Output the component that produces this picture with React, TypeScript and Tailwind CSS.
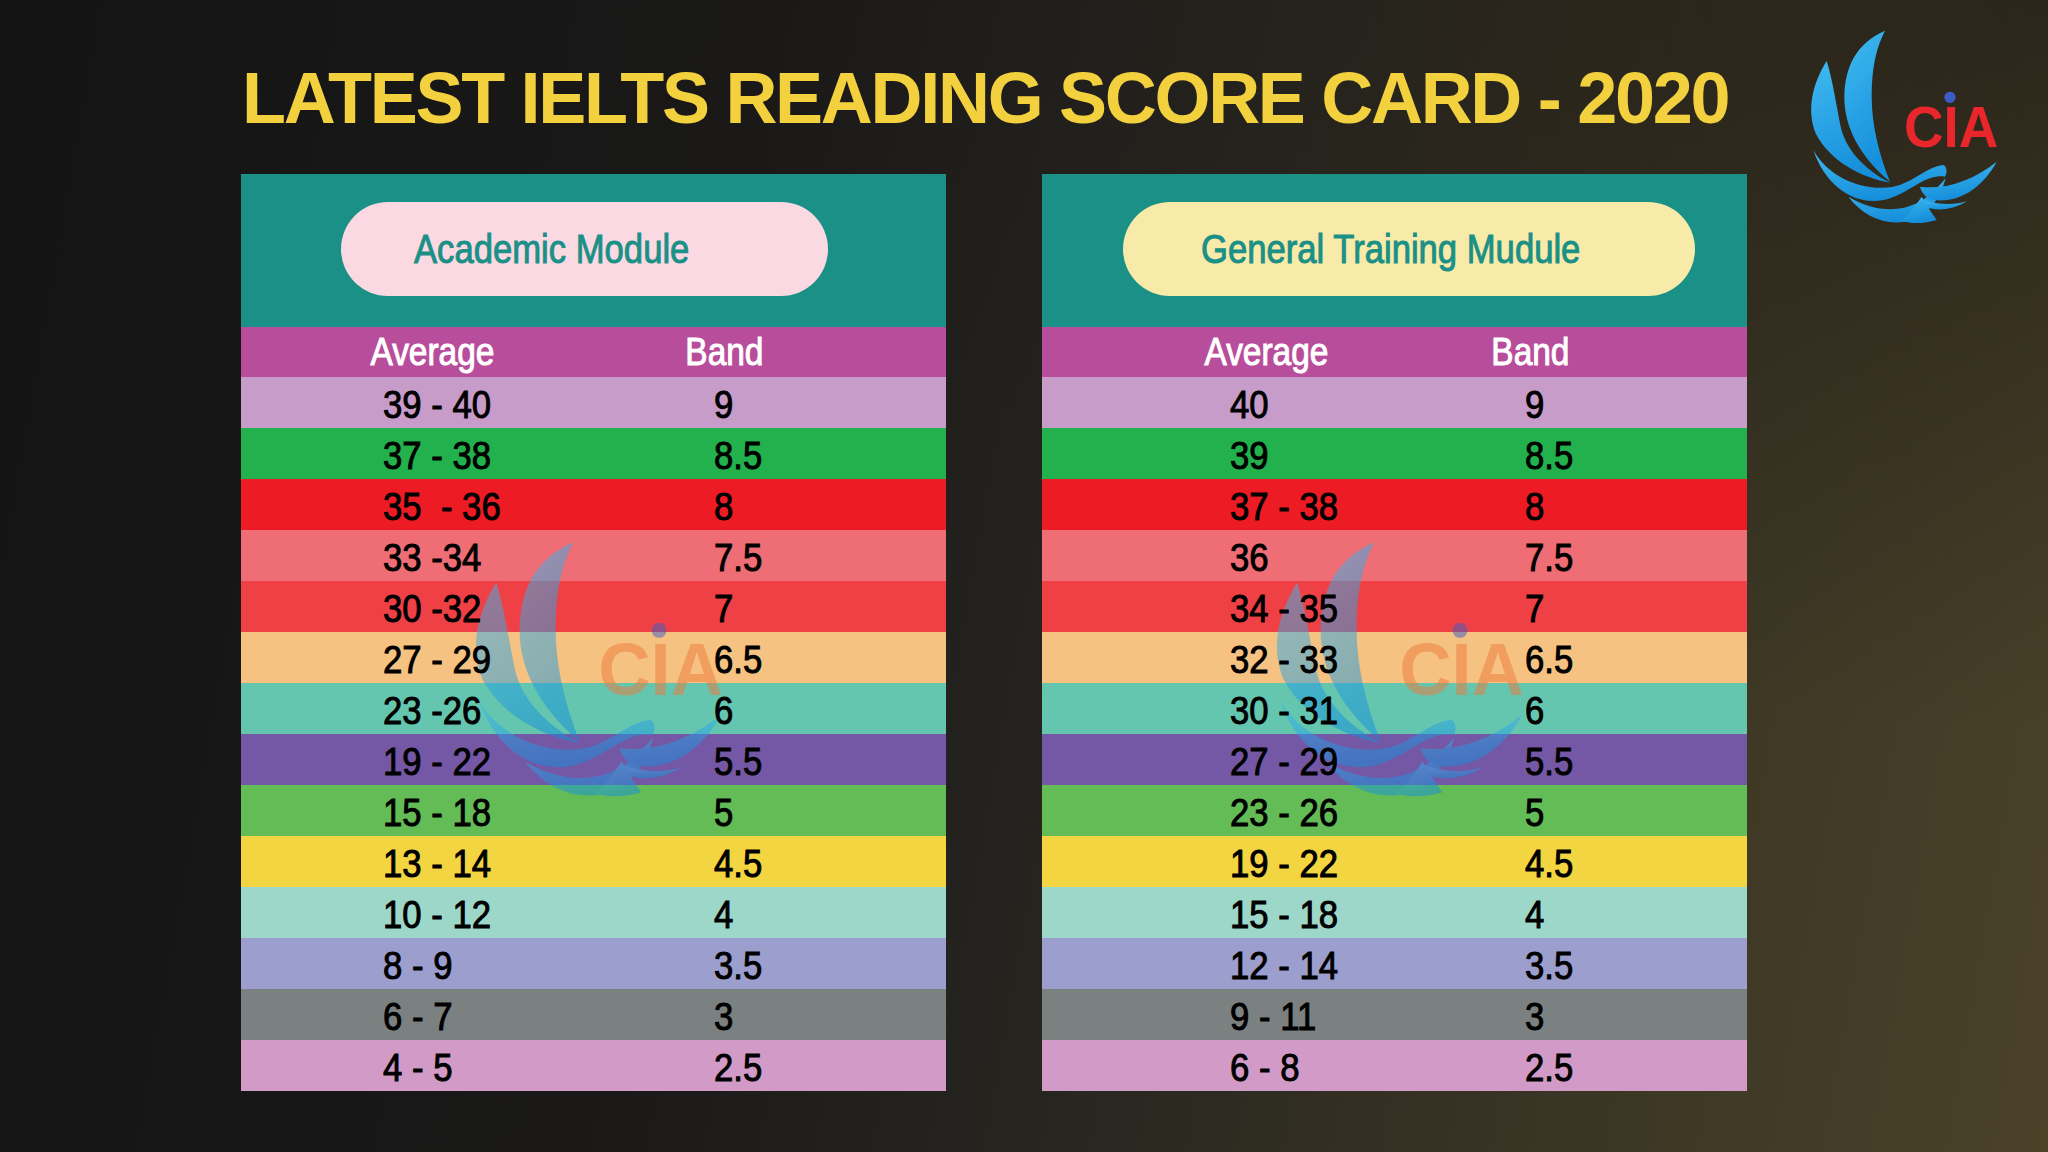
import React from 'react';

type Row = [string, string];

const academicRows: Row[] = [
  ['39 - 40', '9'],
  ['37 - 38', '8.5'],
  ['35  - 36', '8'],
  ['33 -34', '7.5'],
  ['30 -32', '7'],
  ['27 - 29', '6.5'],
  ['23 -26', '6'],
  ['19 - 22', '5.5'],
  ['15 - 18', '5'],
  ['13 - 14', '4.5'],
  ['10 - 12', '4'],
  ['8 - 9', '3.5'],
  ['6 - 7', '3'],
  ['4 - 5', '2.5'],
];

const generalRows: Row[] = [
  ['40', '9'],
  ['39', '8.5'],
  ['37 - 38', '8'],
  ['36', '7.5'],
  ['34 - 35', '7'],
  ['32 - 33', '6.5'],
  ['30 - 31', '6'],
  ['27 - 29', '5.5'],
  ['23 - 26', '5'],
  ['19 - 22', '4.5'],
  ['15 - 18', '4'],
  ['12 - 14', '3.5'],
  ['9 - 11', '3'],
  ['6 - 8', '2.5'],
];

const rowColors = [
  'bg-[#c89cc9]',
  'bg-[#22b14c]',
  'bg-[#ed1c24]',
  'bg-[#ef6d74]',
  'bg-[#ef4145]',
  'bg-[#f6c282]',
  'bg-[#65c6b0]',
  'bg-[#7457a5]',
  'bg-[#64bc56]',
  'bg-[#f3d542]',
  'bg-[#9dd7c9]',
  'bg-[#9c9ece]',
  'bg-[#7b8180]',
  'bg-[#d29bc7]',
];

function CiaLogo({ id, textColor = '#e8262c', className }: { id: string; textColor?: string; className?: string }) {
  return (
    <svg viewBox="78 87 600 588" className={className}>
      <defs>
        <linearGradient id={id} x1="0" y1="0" x2="0.3" y2="1">
          <stop offset="0" stopColor="#3fbaf0" />
          <stop offset="1" stopColor="#168fdb" />
        </linearGradient>
      </defs>
      <g fill={`url(#${id})`}>
        {/* outer feather */}
        <path d="M140,183 C98,250 78,330 108,402 C150,482 240,532 330,548 C258,510 198,452 182,380 C168,310 158,240 140,183 Z" />
        {/* inner tall feather */}
        <path d="M315,92 C228,130 195,200 193,290 C192,380 240,470 330,545 C300,470 275,380 275,290 C275,200 290,140 315,92 Z" />
        {/* upper wave */}
        <path d="M100,450 C150,540 260,575 340,560 C400,548 440,500 490,495 C502,500 502,520 495,530 C440,520 400,570 330,595 C240,625 140,570 100,450 Z" />
        {/* lower wave */}
        <path d="M205,590 C270,630 350,640 410,610 C450,590 475,560 497,535 C480,595 450,640 390,662 C320,680 250,650 205,590 Z" />
        {/* right wing */}
        <path d="M420,560 C500,570 580,540 650,485 C610,560 540,610 460,600 C440,595 425,580 420,560 Z" />
        <path d="M432,600 C470,612 515,618 560,604 C520,630 470,634 440,622 Z" />
        {/* tail */}
        <path d="M365,662 C390,640 410,612 425,590 C440,615 455,640 470,660 C430,672 395,672 365,662 Z" />
      </g>
      <circle cx="510" cy="292" r="17" fill="#3b5cc6" />
      <text
        x="372"
        y="440"
        fontSize="170"
        fontWeight="700"
        fill={textColor}
        fontFamily="'Liberation Sans', Arial, sans-serif"
        textLength="283"
        lengthAdjust="spacingAndGlyphs"
      >
        CIA
      </text>
    </svg>
  );
}

interface ScoreTableProps {
  id: string;
  title: string;
  rows: Row[];
  pillClass: string;
  avgHeaderClass: string;
  bandHeaderClass: string;
  avgCellClass: string;
}

function ScoreTable({ id, title, rows, pillClass, avgHeaderClass, bandHeaderClass, avgCellClass }: ScoreTableProps) {
  return (
    <div className="relative flex w-[705px] shrink-0 flex-col [-webkit-text-stroke:1px_currentColor]">
      <div className="h-[153px] bg-[#1a9086] pt-[28px]">
        <div className={pillClass}>
          <span className="inline-block origin-left scale-x-[0.845] whitespace-nowrap text-[41px] leading-none text-[#1a9086]">
            {title}
          </span>
        </div>
      </div>

      <div className="flex h-[50px] bg-[#b84e9b] text-[38px] leading-[50px] text-white">
        <div className={avgHeaderClass}>
          <span className="inline-block scale-x-[0.88]">Average</span>
        </div>
        <div className={bandHeaderClass}>
          <span className="inline-block scale-x-[0.88]">Band</span>
        </div>
      </div>

      {rows.map(([avg, band], i) => (
        <div key={avg} className={`flex h-[51px] text-[39px] leading-[55px] text-black ${rowColors[i]}`}>
          <div className={avgCellClass}>
            <span className="relative z-10 inline-block origin-left scale-x-[0.89] whitespace-pre">{avg}</span>
          </div>
          <div>
            <span className="relative z-10 inline-block origin-left scale-x-[0.89]">{band}</span>
          </div>
        </div>
      ))}

      <CiaLogo
        id={`${id}-mark`}
        textColor="#ee7a3a"
        className="pointer-events-none absolute left-[228px] top-[366px] h-[259px] w-[264px] opacity-50"
      />
    </div>
  );
}

export default function App() {
  return (
    <div className="flex h-[1152px] w-[2048px] overflow-hidden bg-[radial-gradient(ellipse_at_top_right,rgba(24,20,16,0.55),transparent_45%),linear-gradient(100deg,#141414_0%,#1a1918_35%,#272520_55%,#3a3524_78%,#4a4229_100%)] font-['Liberation_Sans',Arial,sans-serif]">
      <div className="flex shrink-0 flex-col pl-[241px] pt-[62px]">
        <h1 className="ml-[1px] h-[72px] whitespace-nowrap text-[72px] font-bold leading-none tracking-[-2.3px] text-[#f2d03e]">
          LATEST IELTS READING SCORE CARD - 2020
        </h1>

        <div className="mt-[40px] flex gap-[96px]">
          <ScoreTable
            id="academic"
            title="Academic Module"
            rows={academicRows}
            pillClass="ml-[100px] flex h-[94px] w-[487px] items-center rounded-full bg-[#fbd9e3] pl-[73px]"
            avgHeaderClass="ml-[91px] w-[200px] text-center"
            bandHeaderClass="ml-[92px] w-[200px] text-center"
            avgCellClass="w-[473px] pl-[142px]"
          />
          <ScoreTable
            id="general"
            title="General Training Mudule"
            rows={generalRows}
            pillClass="ml-[81px] flex h-[94px] w-[572px] items-center rounded-full bg-[#f8eaa8] pl-[78px]"
            avgHeaderClass="ml-[124px] w-[200px] text-center"
            bandHeaderClass="ml-[64px] w-[200px] text-center"
            avgCellClass="w-[483px] pl-[188px]"
          />
        </div>
      </div>

      <CiaLogo id="brand" className="ml-[59px] mt-[29px] h-[196px] w-[200px] shrink-0" />
    </div>
  );
}
